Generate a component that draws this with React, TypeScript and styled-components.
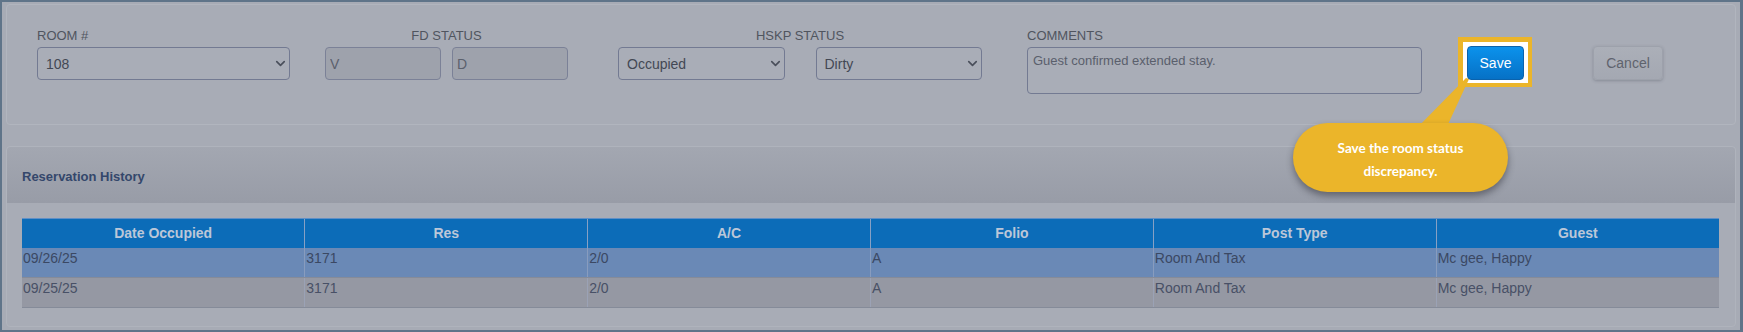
import styled, { createGlobalStyle } from 'styled-components';
import { ChevronDown } from 'lucide-react';

const GlobalStyle = createGlobalStyle`
  html, body {
    margin: 0;
    padding: 0;
    background: #a7abb5;
  }
  body {
    font-family: 'Liberation Sans', Arial, Helvetica, sans-serif;
  }
  * {
    box-sizing: border-box;
  }
`;

const columns = ['Date Occupied', 'Res', 'A/C', 'Folio', 'Post Type', 'Guest'];

const history = [
  { date: '09/26/25', res: '3171', ac: '2/0', folio: 'A', postType: 'Room And Tax', guest: 'Mc gee, Happy' },
  { date: '09/25/25', res: '3171', ac: '2/0', folio: 'A', postType: 'Room And Tax', guest: 'Mc gee, Happy' },
];

const App = () => {
  return (
    <>
      <GlobalStyle />
      <Frame>
        <FormPanel>
          <FieldGroup width={253}>
            <Label>ROOM #</Label>
            <SelectBox>
              <Select defaultValue="108">
                <option>108</option>
              </Select>
              <Chevron size={15} strokeWidth={2.6} />
            </SelectBox>
          </FieldGroup>

          <FieldGroup width={243} offset={35}>
            <Label align="center">FD STATUS</Label>
            <Controls gap={11}>
              <ReadOnlyInput value="V" readOnly />
              <ReadOnlyInput value="D" readOnly />
            </Controls>
          </FieldGroup>

          <FieldGroup width={364} offset={50}>
            <Label align="center">HSKP STATUS</Label>
            <Controls gap={31}>
              <SelectBox>
                <Select defaultValue="Occupied">
                  <option>Occupied</option>
                </Select>
                <Chevron size={15} strokeWidth={2.6} />
              </SelectBox>
              <SelectBox>
                <Select defaultValue="Dirty">
                  <option>Dirty</option>
                </Select>
                <Chevron size={15} strokeWidth={2.6} />
              </SelectBox>
            </Controls>
          </FieldGroup>

          <FieldGroup width={395} offset={45}>
            <Label>COMMENTS</Label>
            <Comments defaultValue="Guest confirmed extended stay." />
          </FieldGroup>

          <SaveSpot>
            <Highlight />
            <SaveButton>Save</SaveButton>
            <Tail width="70" height="60" viewBox="0 0 70 60">
              <polygon points="6,56 38,56 63,2 60,1" fill="#ebb52a" />
            </Tail>
            <Bubble>
              <BubbleText>Save the room status discrepancy.</BubbleText>
            </Bubble>
          </SaveSpot>

          <CancelButton>Cancel</CancelButton>
        </FormPanel>

        <Section>
          <SectionHeader>Reservation History</SectionHeader>
          <SectionBody>
            <Table>
              <thead>
                <tr>
                  {columns.map((c) => (
                    <HeadCell key={c}>{c}</HeadCell>
                  ))}
                </tr>
              </thead>
              <tbody>
                {history.map((row, i) => (
                  <Row key={row.date} selected={i == 0}>
                    <Cell>{row.date}</Cell>
                    <Cell>{row.res}</Cell>
                    <Cell>{row.ac}</Cell>
                    <Cell>{row.folio}</Cell>
                    <Cell>{row.postType}</Cell>
                    <Cell>{row.guest}</Cell>
                  </Row>
                ))}
              </tbody>
            </Table>
          </SectionBody>
        </Section>
      </Frame>
    </>
  );
};

const Frame = styled.div`
  width: 1743px;
  height: 332px;
  border: 2px solid #5f7489;
  border-right-width: 3px;
  background: #a7abb5;
  padding: 2px 4px 0 4px;
  display: flex;
  flex-direction: column;
`;

const FormPanel = styled.div`
  height: 121px;
  flex-shrink: 0;
  border: 1px solid #b1b5be;
  border-radius: 4px;
  background: #a8acb6;
  display: flex;
  align-items: flex-start;
  padding: 23px 0 0 30px;
`;

const FieldGroup = styled.div<{ width: number; offset?: number }>`
  width: ${(p) => p.width}px;
  margin-left: ${(p) => p.offset || 0}px;
  display: flex;
  flex-direction: column;
`;

const Label = styled.div<{ align?: string }>`
  font-size: 13px;
  line-height: 15px;
  color: #50555f;
  margin-bottom: 4px;
  text-align: ${(p) => p.align || 'left'};
`;

const Controls = styled.div<{ gap: number }>`
  display: flex;
  gap: ${(p) => p.gap}px;
  > * {
    flex: 1;
  }
`;

const SelectBox = styled.div`
  position: relative;
  height: 33px;
`;

const Select = styled.select`
  appearance: none;
  width: 100%;
  height: 100%;
  border: 1px solid #737a92;
  border-radius: 4px;
  background: #a9adb7;
  color: #434854;
  font-family: inherit;
  font-size: 14px;
  padding: 0 0 0 8px;
  outline: none;
`;

const Chevron = styled(ChevronDown)`
  position: absolute;
  right: 2px;
  top: 9px;
  color: #4a4f5b;
  pointer-events: none;
`;

const ReadOnlyInput = styled.input`
  width: 100%;
  min-width: 0;
  height: 33px;
  border: 1px solid #7b8197;
  border-radius: 4px;
  background: #9ea2ac;
  color: #5b606c;
  font-family: inherit;
  font-size: 14px;
  padding: 0 4px;
  outline: none;
`;

const Comments = styled.textarea`
  height: 47px;
  border: 1px solid #737a92;
  border-radius: 4px;
  background: #a9adb7;
  color: #5a5f6c;
  font-family: inherit;
  font-size: 13px;
  padding: 5px 5px;
  resize: none;
  outline: none;
`;

const SaveSpot = styled.div`
  position: relative;
  margin: 18px 0 0 45px;
  width: 57px;
  height: 34px;
`;

const Highlight = styled.div`
  position: absolute;
  top: -9px;
  left: -9px;
  right: -8px;
  bottom: -7px;
  border: 5px solid #ebb52a;
  border-right-width: 4px;
  border-bottom-width: 4px;
  background: #fff;
`;

const SaveButton = styled.button`
  position: relative;
  width: 57px;
  height: 34px;
  border: 1px solid #0b63ad;
  border-radius: 4px;
  background: linear-gradient(#0b92ec, #0671c6);
  color: #fff;
  font-family: inherit;
  font-size: 14px;
  padding: 0;
`;

const Tail = styled.svg`
  position: absolute;
  left: -61px;
  top: 31px;
  z-index: 2;
`;

const Bubble = styled.div`
  position: absolute;
  left: -174px;
  top: 77px;
  width: 215px;
  height: 69px;
  border-radius: 35px;
  background: #ebb52a;
  box-shadow: 0 4px 7px rgba(30, 30, 40, 0.45);
  display: flex;
  align-items: center;
  justify-content: center;
  padding-top: 5px;
  z-index: 3;
`;

const BubbleText = styled.div`
  width: 145px;
  font-family: Lato, 'Open Sans', sans-serif;
  font-weight: bold;
  font-size: 13.5px;
  line-height: 23px;
  color: #fff;
  text-align: center;
`;

const CancelButton = styled.button`
  margin: 18px 0 0 69px;
  width: 70px;
  height: 34px;
  border: 1px solid #9da1ab;
  border-radius: 4px;
  background: linear-gradient(#abafb8, #a4a8b2);
  box-shadow: 0 1px 3px rgba(60, 64, 76, 0.3);
  color: #5f636d;
  font-family: inherit;
  font-size: 14px;
  padding: 0;
`;

const Section = styled.div`
  margin-top: 21px;
  height: 181px;
  border: 1px solid #afb3bc;
  border-radius: 4px;
  background: #a8acb6;
  display: flex;
  flex-direction: column;
`;

const SectionHeader = styled.div`
  height: 56px;
  flex-shrink: 0;
  display: flex;
  align-items: center;
  padding: 3px 0 0 15px;
  background: linear-gradient(#a3a7b1, #989ca7);
  border-radius: 4px 4px 0 0;
  font-size: 13px;
  font-weight: bold;
  color: #34476b;
`;

const SectionBody = styled.div`
  padding: 15px 16px 0 15px;
`;

const Table = styled.table`
  width: 100%;
  border-collapse: collapse;
  table-layout: fixed;
  font-size: 14px;
`;

const HeadCell = styled.th`
  height: 29px;
  padding: 0;
  background: #0c6cb8;
  color: #bcc7d8;
  font-weight: bold;
  text-align: center;
  border-left: 1px solid #87a0c4;
  border-top: 1px solid #5f8fc6;
  &:first-child {
    border-left: none;
  }
`;

const Row = styled.tr<{ selected?: boolean }>`
  background: ${(p) => (p.selected ? '#6a89b6' : '#9598a3')};
  color: ${(p) => (p.selected ? '#3b4863' : '#485066')};
`;

const Cell = styled.td`
  height: 30px;
  padding: 2px 0 0 1px;
  vertical-align: top;
  border-left: 1px solid rgba(160, 172, 196, 0.55);
  border-bottom: 1px solid #858b99;
  &:first-child {
    border-left: none;
  }
`;

export default App;
